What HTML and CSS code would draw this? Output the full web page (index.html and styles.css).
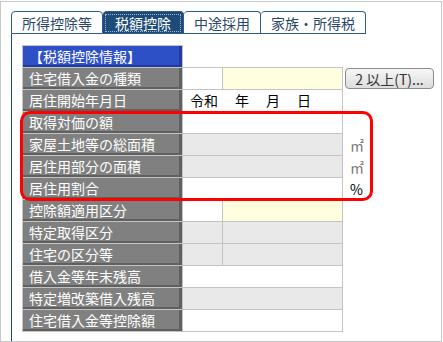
FILE: index.html
```html
<!doctype html>
<html>
	<head>
		<title>税額控除</title>
		<link rel="stylesheet" href="styles.css">
	</head>

	<body>
		<div class="frame">
			<div class="tabs">
				<div class="tab">所得控除等</div>
				<div class="tab active"><span class="focus">税額控除</span></div>
				<div class="tab">中途採用</div>
				<div class="tab">家族・所得税</div>
			</div>

			<div class="panel">
				<div class="grid">
					<div class="row">
						<div class="label head">【税額控除情報】</div>
					</div>
					<div class="row">
						<div class="label">住宅借入金の種類</div>
						<div class="cell short"></div>
						<div class="cell long yellow"></div>
						<div class="extra"><button class="more">2 以上(T)...</button></div>
					</div>
					<div class="row">
						<div class="label">居住開始年月日</div>
						<div class="cell full date">
							<span>令和</span><span>年</span><span>月</span><span>日</span>
						</div>
					</div>
					<div class="row">
						<div class="label">取得対価の額</div>
						<div class="cell full"></div>
					</div>
					<div class="row">
						<div class="label">家屋土地等の総面積</div>
						<div class="cell full gray"></div>
						<div class="extra unit dim">㎡</div>
					</div>
					<div class="row">
						<div class="label">居住用部分の面積</div>
						<div class="cell full gray"></div>
						<div class="extra unit dim">㎡</div>
					</div>
					<div class="row">
						<div class="label">居住用割合</div>
						<div class="cell full"></div>
						<div class="extra unit">%</div>
					</div>
					<div class="row">
						<div class="label">控除額適用区分</div>
						<div class="cell short"></div>
						<div class="cell long yellow"></div>
					</div>
					<div class="row">
						<div class="label">特定取得区分</div>
						<div class="cell short gray"></div>
						<div class="cell long gray"></div>
					</div>
					<div class="row">
						<div class="label">住宅の区分等</div>
						<div class="cell short gray"></div>
						<div class="cell long gray"></div>
					</div>
					<div class="row">
						<div class="label">借入金等年末残高</div>
						<div class="cell full"></div>
					</div>
					<div class="row">
						<div class="label">特定増改築借入残高</div>
						<div class="cell full gray"></div>
					</div>
					<div class="row last">
						<div class="label">住宅借入金等控除額</div>
						<div class="cell full"></div>
					</div>

					<div class="mark"></div>
				</div>
			</div>
		</div>
	</body>
</html>
```

FILE: styles.css
```css
:root {
	--line: #c3c3c3;
	--tab-line: #2f5a84;
	--tab-text: #2a4866;
	--tab-active: #1e4c7a;
	--label: #808080;
	--label-dark: #606060;
	--head: #2e50c6;
	--head-dark: #1f3b9c;
	--gray-fill: #e9e9e9;
	--yellow: #ffffe0;
	--mark: #ff0000;
}

body {
	margin: 0;
	background-color: #ffffff;
	font-family: "Noto Sans CJK JP", "Noto Sans", sans-serif;
	font-size: 14px;
	color: #000;
}

.frame {
	width: 442px;
	height: 341px;
	margin-top: 1px;
	border: 1px solid #c8c8c8;
	box-sizing: border-box;
	overflow: hidden;
	padding: 9px 0 0 10px;
}

/* tabs */
.tabs {
	display: flex;
	height: 23px;
}

.tab {
	display: flex;
	align-items: center;
	padding: 0 10px;
	border: 1px solid var(--tab-line);
	border-left-width: 0;
	border-radius: 4px 4px 0 0;
	color: var(--tab-text);
	line-height: 20px;
	white-space: nowrap;
}

.tab:first-child {
	border-left-width: 1px;
}

.tab.active {
	background-color: var(--tab-active);
	color: #ffffff;
	padding: 0 2px;
}

.focus {
	padding: 0 9px;
	border: 1px dotted #9fb6cc;
	line-height: 16px;
}

/* panel */
.panel {
	border-left: 1px solid #1f4a73;
	height: 320px;
	padding: 11px 0 0 10px;
}

.grid {
	position: relative;
}

.row {
	display: flex;
	height: 22px;
}

.row.last {
	height: 23px;
}

.label,
.cell {
	box-sizing: border-box;
	border-top: 1px solid var(--line);
	border-left: 1px solid var(--line);
}

.row.last .label,
.row.last .cell {
	border-bottom: 1px solid var(--line);
}

.label {
	width: 160px;
	padding-left: 6px;
	background-color: var(--label);
	box-shadow: inset -3px -2px 0 var(--label-dark);
	color: #ffffff;
	line-height: 21px;
	white-space: nowrap;
}

.label.head {
	width: 161px;
	border-right: 1px solid var(--line);
	background-color: var(--head);
	box-shadow: inset -3px -2px 0 var(--head-dark);
}

.cell {
	background-color: #ffffff;
}

.cell.short {
	width: 40px;
}

.cell.long {
	width: 121px;
	border-right: 1px solid var(--line);
}

.cell.full {
	width: 161px;
	border-right: 1px solid var(--line);
}

.cell.gray {
	background-color: var(--gray-fill);
}

.cell.yellow {
	background-color: var(--yellow);
}

.date {
	display: flex;
	gap: 17px;
	padding-left: 7px;
	line-height: 21px;
}

.extra {
	display: flex;
	align-items: flex-start;
	padding-left: 2px;
}

.unit {
	padding-left: 7px;
	line-height: 24px;
}

.dim {
	color: #777777;
}

.more {
	width: 89px;
	height: 21px;
	margin-top: 1px;
	padding: 0;
	border: 1px solid #8c8c8c;
	border-radius: 4px;
	background: linear-gradient(#f6f6f6, #dddddd);
	font-family: "Noto Sans CJK JP", "Noto Sans", sans-serif;
	font-size: 14px;
	line-height: 18px;
	color: #333333;
}

/* red highlight around the area rows */
.mark {
	position: absolute;
	left: -2px;
	top: 66px;
	width: 353px;
	height: 90px;
	box-sizing: border-box;
	border: 3px solid var(--mark);
	border-radius: 10px;
	pointer-events: none;
}
```
